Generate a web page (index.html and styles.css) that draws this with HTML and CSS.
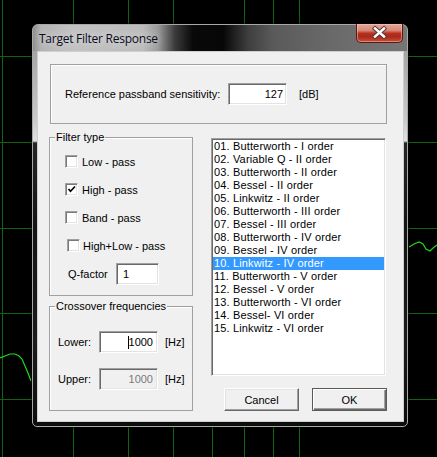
FILE: index.html
```html
<!DOCTYPE html>
<html>
<head>
<meta charset="utf-8">
<title>Target Filter Response</title>
<link rel="stylesheet" href="styles.css">
</head>
<body>
<div class="desktop">
  <svg class="graph" width="437" height="457" viewBox="0 0 437 457">
    <g class="grid">
      <line x1="2.5" y1="0" x2="2.5" y2="457"/>
      <line x1="73.5" y1="0" x2="73.5" y2="457"/>
      <line x1="128.5" y1="0" x2="128.5" y2="457"/>
      <line x1="173.5" y1="0" x2="173.5" y2="457"/>
      <line x1="212.5" y1="427" x2="212.5" y2="457"/>
      <line x1="244.5" y1="0" x2="244.5" y2="457"/>
      <line x1="273.5" y1="0" x2="273.5" y2="457"/>
      <line x1="299.5" y1="0" x2="299.5" y2="457"/>
      <line x1="0" y1="56.5" x2="437" y2="56.5"/>
      <line x1="0" y1="142.5" x2="437" y2="142.5"/>
      <line x1="0" y1="228.5" x2="437" y2="228.5"/>
      <line x1="0" y1="313.5" x2="437" y2="313.5"/>
      <line x1="0" y1="399.5" x2="437" y2="399.5"/>
    </g>
    <polyline class="curve" points="0,358 5,356 10,354 15,354 19,356 22,359 25,366 28,373 31,381"/>
    <polyline class="curve" points="409,247 414,244 419,242 423,244 426,249 430,251 433,248 437,245"/>
  </svg>

  <div class="window">
    <div class="titlebar">
      <span class="title">Target Filter Response</span>
      <div class="close">
        <svg width="47" height="19" viewBox="0 0 47 19">
          <path class="x-outline" d="M19 5.5 L28 13.5 M28 5.5 L19 13.5"/>
          <path class="x-fill" d="M19 5.5 L28 13.5 M28 5.5 L19 13.5"/>
        </svg>
      </div>
    </div>

    <div class="client">
      <div class="ref-group">
        <span class="ref-label">Reference passband sensitivity:</span>
        <div class="edit edit-ref">127</div>
        <span class="unit unit-db">[dB]</span>
      </div>

      <div class="lower">
        <div class="left-col">
          <div class="group group-filter">
            <div class="legend">Filter type</div>
            <div class="check-row first"><span class="cb"></span><span class="cb-label">Low - pass</span></div>
            <div class="check-row"><span class="cb checked"><svg width="9" height="9" viewBox="0 0 9 9"><path d="M1.5 4 L3.5 6.3 L8 1.5"/></svg></span><span class="cb-label">High - pass</span></div>
            <div class="check-row"><span class="cb"></span><span class="cb-label">Band - pass</span></div>
            <div class="check-row shifted"><span class="cb"></span><span class="cb-label">High+Low - pass</span></div>
            <div class="q-row"><span class="q-label">Q-factor</span><div class="edit edit-q">1</div></div>
          </div>

          <div class="group group-cross">
            <div class="legend">Crossover frequencies</div>
            <div class="freq-row first"><span class="freq-label">Lower:</span><div class="edit edit-freq"><span class="caret"></span>1000</div><span class="unit">[Hz]</span></div>
            <div class="freq-row"><span class="freq-label">Upper:</span><div class="edit edit-freq disabled">1000</div><span class="unit">[Hz]</span></div>
          </div>
        </div>

        <div class="right-col">
          <ul class="listbox">
            <li>01. Butterworth - I order</li>
            <li>02. Variable Q - II order</li>
            <li>03. Butterworth - II order</li>
            <li>04. Bessel - II order</li>
            <li>05. Linkwitz - II order</li>
            <li>06. Butterworth - III order</li>
            <li>07. Bessel - III order</li>
            <li>08. Butterworth - IV order</li>
            <li>09. Bessel - IV order</li>
            <li class="selected">10. Linkwitz - IV order</li>
            <li>11. Butterworth - V order</li>
            <li>12. Bessel - V order</li>
            <li>13. Butterworth - VI order</li>
            <li>14. Bessel- VI order</li>
            <li>15. Linkwitz - VI order</li>
          </ul>
          <div class="buttons">
            <button class="btn">Cancel</button>
            <button class="btn btn-default">OK</button>
          </div>
        </div>
      </div>
    </div>
  </div>
</div>
</body>
</html>
```

FILE: styles.css
```css
html, body {
  margin: 0;
  padding: 0;
  background: #000;
}

body {
  font-family: "Liberation Sans", Arial, sans-serif;
  font-size: 11px;
  color: #000;
}

.desktop {
  position: relative;
  width: 437px;
  height: 457px;
  overflow: hidden;
  background: #000;
}

.graph {
  position: absolute;
  left: 0;
  top: 0;
}

.grid line {
  stroke: #0d650f;
  stroke-width: 1;
}

.curve {
  fill: none;
  stroke: #1fd81f;
  stroke-width: 1.2;
}

/* ---------- window frame ---------- */
.window {
  position: absolute;
  left: 32px;
  top: 24px;
  width: 376px;
  height: 403px;
  box-sizing: border-box;
  border: 1px solid #a8a8a8;
  border-radius: 6px 6px 5px 5px;
  display: flex;
  flex-direction: column;
  background:
    linear-gradient(to right, #8e8e8e 0, #b4b4b4 8px, #c2c2c2 40px, #bcbcbc 110px, #9a9a9a 125px, #3a3a3a 142px, #090909 160px, #070707 190px, #3e3e3e 215px, #5a5a5a 240px, #6a6a6a 300px, #767676 100%) top left / 100% 26px no-repeat,
    linear-gradient(to bottom, #8c8c8c 0, #a6a6a6 28px, #c9c9c9 95px, #e0e0e0 116px, #262626 118px, #141414 200px, #1b1b1b 320px, #0c0c0c 100%);
  box-shadow: 0 0 0 1px rgba(0, 0, 0, 0.6);
}

.titlebar {
  height: 26px;
  flex: none;
  display: flex;
  justify-content: space-between;
  align-items: flex-start;
}

.title {
  align-self: center;
  margin-left: 6px;
  font-family: "Open Sans", "Noto Sans", sans-serif;
  font-size: 12px;
  letter-spacing: -0.25px;
  color: #0a0a1c;
  text-shadow: 0 0 8px rgba(255, 255, 255, 0.8);
}

.close {
  width: 47px;
  height: 19px;
  margin-top: -1px;
  margin-right: 4px;
  box-sizing: border-box;
  border: 1px solid #5a1a10;
  border-top: none;
  border-radius: 0 0 5px 5px;
  background: linear-gradient(to bottom, #e3a698 0, #d88a79 35%, #b8321e 52%, #a9291a 70%, #c8503a 100%);
  box-shadow: inset 0 0 0 1px rgba(255, 210, 200, 0.45);
}

.close svg {
  display: block;
  margin: -1px 0 0 -1px;
}

.x-outline {
  fill: none;
  stroke: #5a3a36;
  stroke-width: 4.4;
  stroke-linecap: square;
}

.x-fill {
  fill: none;
  stroke: #fff;
  stroke-width: 2.4;
  stroke-linecap: square;
}

/* ---------- client area ---------- */
.client {
  margin: 0 3px 0 4px;
  height: 371px;
  flex: none;
  box-sizing: border-box;
  border: 1px solid #cfcfcf;
  background: #f0f0f0;
  padding: 12px 0 0 12px;
}

.ref-group {
  width: 337px;
  height: 60px;
  box-sizing: border-box;
  border: 1px solid #a0a0a0;
  box-shadow: inset 1px 1px 0 #fff;
  display: flex;
  align-items: center;
}

.ref-label {
  margin-left: 14px;
  width: 163px;
}

.edit {
  height: 22px;
  box-sizing: border-box;
  background: #fff;
  border: 1px solid;
  border-color: #a0a0a0 #fff #fff #a0a0a0;
  box-shadow: inset 1px 1px 0 #696969, inset -1px -1px 0 #e3e3e3;
  display: flex;
  align-items: center;
  justify-content: flex-end;
  padding-right: 3px;
}

.edit-ref {
  width: 59px;
}

.unit-db {
  margin-left: 12px;
}

.lower {
  display: flex;
  margin-top: 13px;
  margin-left: -1px;
}

.left-col {
  width: 144px;
  flex: none;
}

.group {
  box-sizing: border-box;
  border: 1px solid #a0a0a0;
  box-shadow: inset 1px 1px 0 #fff;
}

.legend {
  width: max-content;
  margin: -7px 0 0 5px;
  padding: 0 1px;
  height: 13px;
  line-height: 13px;
  background: #f0f0f0;
}

.group-filter {
  height: 159px;
}

.check-row {
  display: flex;
  align-items: center;
  height: 13px;
  margin-top: 15px;
  margin-left: 15px;
}

.check-row.first {
  margin-top: 11px;
}

.check-row.shifted {
  margin-left: 17px;
}

.cb {
  width: 13px;
  height: 13px;
  box-sizing: border-box;
  flex: none;
  background: #fff;
  border: 1px solid;
  border-color: #a0a0a0 #fff #fff #a0a0a0;
  box-shadow: inset 1px 1px 0 #7a7a7a, inset -1px -1px 0 #e3e3e3;
  display: flex;
  align-items: center;
  justify-content: center;
}

.cb svg path {
  fill: none;
  stroke: #000;
  stroke-width: 1.7;
}

.cb-label {
  margin-left: 4px;
}

.check-row.shifted .cb-label {
  margin-left: 3px;
}

.q-row {
  display: flex;
  align-items: center;
  height: 22px;
  margin-top: 11px;
  margin-left: 18px;
}

.q-label {
  width: 48px;
}

.edit-q {
  width: 43px;
  justify-content: flex-start;
  padding-left: 6px;
}

.group-cross {
  height: 105px;
  margin-top: 10px;
}

.freq-row {
  display: flex;
  align-items: center;
  height: 22px;
  margin-top: 15px;
  margin-left: 8px;
}

.freq-row.first {
  margin-top: 18px;
}

.freq-label {
  width: 41px;
}

.edit-freq {
  width: 59px;
  padding-right: 4px;
}

.edit-freq.disabled {
  background: #f0f0f0;
  color: #7a7a7a;
}

.caret {
  width: 1px;
  height: 13px;
  background: #000;
  margin-right: 0;
}

.freq-row .unit {
  margin-left: 7px;
}

/* ---------- right column ---------- */
.right-col {
  width: 176px;
  margin-left: 18px;
  padding-top: 1px;
  flex: none;
}

.listbox {
  list-style: none;
  margin: 0;
  padding: 1px 0;
  width: 175px;
  height: 238px;
  box-sizing: border-box;
  background: #fff;
  border: 1px solid;
  border-color: #a0a0a0 #fff #fff #a0a0a0;
  box-shadow: inset 1px 1px 0 #696969, inset -1px -1px 0 #e3e3e3;
}

.listbox li {
  height: 13px;
  line-height: 13px;
  padding-left: 1px;
  margin: 0 1px;
  white-space: nowrap;
  letter-spacing: 0.15px;
}

.listbox li.selected {
  background: #3399ff;
  color: #fff;
}

.buttons {
  display: flex;
  justify-content: flex-end;
  gap: 13px;
  margin-top: 12px;
}

.btn {
  width: 75px;
  height: 23px;
  padding: 0;
  margin: 0;
  font-family: "Liberation Sans", Arial, sans-serif;
  font-size: 11px;
  color: #000;
  background: #f0f0f0;
  border: 1px solid;
  border-color: #fff #696969 #696969 #fff;
  box-shadow: inset -1px -1px 0 #a0a0a0, inset 1px 1px 0 #e3e3e3;
}

.btn-default {
  border: 1px solid #5a5a5a;
  box-shadow: inset 1px 1px 0 #fff, inset -1px -1px 0 #696969, inset -2px -2px 0 #a0a0a0;
}
```
